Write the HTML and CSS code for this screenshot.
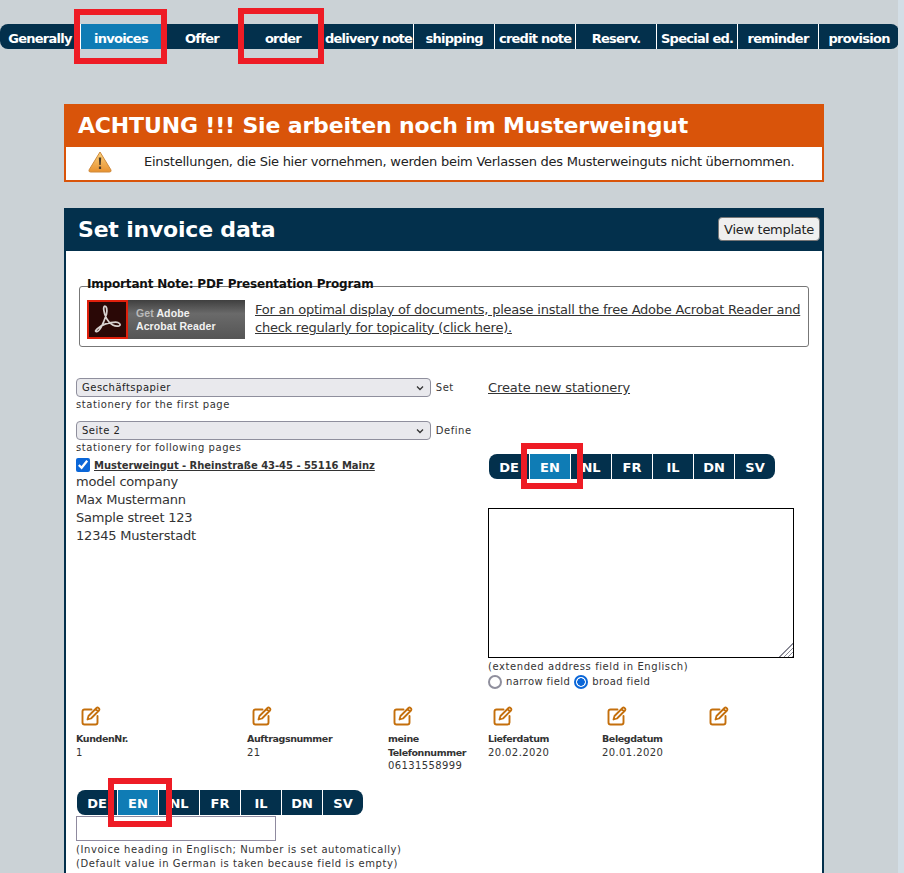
FILE: index.html
```html
<!DOCTYPE html>
<html lang="en">

<head>
  <meta charset="UTF-8">
  <meta name="viewport" content="width=device-width, initial-scale=1.0">
  <title>Set invoice data</title>
  <link rel="stylesheet" href="styles.css">
</head>

<body>
  <!-- main menu -->
  <ul class="tabs nav">
    <li>Generally</li>
    <li class="active">invoices</li>
    <li>Offer</li>
    <li>order</li>
    <li>delivery note</li>
    <li>shipping</li>
    <li>credit note</li>
    <li>Reserv.</li>
    <li>Special ed.</li>
    <li>reminder</li>
    <li>provision</li>
  </ul>

  <div class="alert">
    <h2 class="alert-head">ACHTUNG !!! Sie arbeiten noch im Musterweingut</h2>
    <div class="alert-body">
      <svg class="warn" viewBox="0 0 24 22" width="24" height="22">
        <defs>
          <linearGradient id="warn-fill" x1="0" y1="0" x2="0" y2="1">
            <stop offset="0" stop-color="#fbd27e"/>
            <stop offset="1" stop-color="#e8912f"/>
          </linearGradient>
        </defs>
        <path d="M12 1 L23 19 Q23.500 21 21.500 21 L2.500 21 Q0.500 21 1 19 Z" fill="url(#warn-fill)" stroke="#cf8a3c" stroke-width="1"/>
        <path d="M10.800 6.500 H13.200 L12.700 14 H11.300 Z M10.900 15.500 H13.100 V18 H10.900 Z" fill="#4a3a28"/>
      </svg>
      <span>Einstellungen, die Sie hier vornehmen, werden beim Verlassen des Musterweinguts nicht übernommen.</span>
    </div>
  </div>

  <div class="panel">
    <div class="panel-head">
      <h2>Set invoice data</h2>
      <button class="btn" type="button">View template</button>
    </div>

    <div class="panel-body">
      <div class="note">
        <div class="note-title">Important Note: PDF Presentation Program</div>
        <div class="badge">
          <div class="badge-logo">
            <svg viewBox="0 0 32 32" width="32" height="32">
              <path d="M5 27.500 C8 29 12 20 15 11 C16 6 15 3 13.500 3 C11.500 3 12 9 15 15 C18 21 24 23.500 27.500 22 C29.500 21 27 18.500 24 18.500 C18 18.500 10 21 6 25 C4.500 26.500 4 27.500 5 27.500 Z" fill="none" stroke="#d8d2d0" stroke-width="1.700"/>
            </svg>
          </div>
          <div class="badge-text"><span class="get">Get</span> Adobe<br>Acrobat Reader</div>
        </div>
        <a class="note-link" href="#">For an optimal display of documents, please install the free Adobe Acrobat Reader and check regularly for topicality (click here).</a>
      </div>

      <div class="cols">
        <div class="col-left">
          <div class="field">
            <select class="sel"><option>Geschäftspapier</option></select>
            Set stationery for the first page
          </div>
          <div class="field">
            <select class="sel"><option>Seite 2</option></select>
            Define stationery for following pages
          </div>
          <label class="sender">
            <input type="checkbox" checked>
            <span>Musterweingut - Rheinstraße 43-45 - 55116 Mainz</span>
          </label>
          <div class="address">
            model company<br>
            Max Mustermann<br>
            Sample street 123<br>
            12345 Musterstadt
          </div>
        </div>

        <div class="col-right">
          <a class="new-link" href="#">Create new stationery</a>
          <ul class="tabs lang lang-top">
            <li>DE</li>
            <li class="active">EN</li>
            <li>NL</li>
            <li>FR</li>
            <li>IL</li>
            <li>DN</li>
            <li>SV</li>
          </ul>
          <div class="addr-wrap">
            <textarea class="addr-box"></textarea>
            <div class="grip"></div>
          </div>
          <div class="hint">(extended address field in Englisch)</div>
          <div class="radios">
            <input type="radio" name="w"> narrow field
            <input type="radio" name="w" checked> broad field
          </div>
        </div>
      </div>

      <div class="meta">
        <div class="meta-item">
          <svg class="pen" viewBox="0 0 20 20" width="20" height="20"><use href="#pen"/></svg>
          <b>KundenNr.</b>1
        </div>
        <div class="meta-item">
          <svg class="pen" viewBox="0 0 20 20" width="20" height="20"><use href="#pen"/></svg>
          <b>Auftragsnummer</b>21
        </div>
        <div class="meta-item">
          <svg class="pen" viewBox="0 0 20 20" width="20" height="20"><use href="#pen"/></svg>
          <b>meine Telefonnummer</b>06131558999
        </div>
        <div class="meta-item">
          <svg class="pen" viewBox="0 0 20 20" width="20" height="20"><use href="#pen"/></svg>
          <b>Lieferdatum</b>20.02.2020
        </div>
        <div class="meta-item">
          <svg class="pen" viewBox="0 0 20 20" width="20" height="20"><use href="#pen"/></svg>
          <b>Belegdatum</b>20.01.2020
        </div>
        <div class="meta-item">
          <svg class="pen" viewBox="0 0 20 20" width="20" height="20"><use href="#pen"/></svg>
        </div>
      </div>

      <ul class="tabs lang">
        <li>DE</li>
        <li class="active">EN</li>
        <li>NL</li>
        <li>FR</li>
        <li>IL</li>
        <li>DN</li>
        <li>SV</li>
      </ul>
      <input class="heading-input" type="text">
      <div class="hint hint-lines">(Invoice heading in Englisch; Number is set automatically)<br>(Default value in German is taken because field is empty)</div>
    </div>
  </div>

  <!-- shared pencil icon -->
  <svg class="defs" width="0" height="0">
    <symbol id="pen" viewBox="0 0 20 20">
      <path d="M10.500 3.500 H3.500 Q1.500 3.500 1.500 5.500 V16.500 Q1.500 18.500 3.500 18.500 H14.500 Q16.500 18.500 16.500 16.500 V10" fill="none" stroke="#c46f0c" stroke-width="1.900" stroke-linecap="round"/>
      <path d="M6.500 13.500 L7.500 10 L15.500 2 Q16.500 1 17.700 2.200 Q19 3.500 18 4.500 L10 12.500 Z M14.500 3 L17 5.500" fill="none" stroke="#c46f0c" stroke-width="1.800" stroke-linejoin="round"/>
    </symbol>
  </svg>

  <!-- red marks drawn over the screenshot -->
  <div class="mark mark-invoices"></div>
  <div class="mark mark-order"></div>
  <div class="mark mark-lang-top"></div>
  <div class="mark mark-lang-bottom"></div>

  <div class="scroll-strip"></div>
</body>

</html>
```

FILE: styles.css
```css
* {
  padding: 0;
  margin: 0;
  box-sizing: border-box;
}

html,
body {
  height: 100%;
  overflow: hidden;
}

body {
  background: #cbd2d6;
  font-family: "DejaVu Sans", Verdana, sans-serif;
  font-size: 13px;
  color: #333;
  padding-top: 24px;
  display: flex;
  flex-direction: column;
}

li {
  list-style: none;
}

a {
  color: #333;
}

.tabs {
  display: flex;
  height: 25px;
  background: #03304c;
  border-radius: 8px;
  overflow: hidden;
  color: #fff;
  font-weight: bold;
  font-size: 13px;
}

.tabs li {
  flex: 1 1 0;
  padding: 0 1px;
  line-height: 28px;
  text-align: center;
  white-space: nowrap;
  border-right: 1px solid #fff;
}

.tabs li:last-child {
  border-right: 0;
}

.tabs .active {
  background: #0f7cb5;
}

.nav {
  width: 899px;
  flex: none;
  letter-spacing: -.75px;
}

.nav li {
  line-height: 29px;
}

.alert {
  flex: none;
  width: 760px;
  margin: 55px 0 0 64px;
  border: 2px solid #d9540a;
  background: #fff;
}

.alert-head {
  margin: -2px -2px 0;
  padding-left: 14px;
  background: #d9540a;
  color: #fff;
  font-size: 22px;
  letter-spacing: -.16px;
  line-height: 43px;
  height: 43px;
}

.alert-body {
  display: flex;
  align-items: center;
  height: 33px;
  padding: 0 0 4px 22px;
  color: #222;
  letter-spacing: -.25px;
}

.warn {
  margin-right: 32px;
}

.panel {
  flex: 1;
  width: 760px;
  margin: 26px 0 0 64px;
  border: 2px solid #03304c;
  border-bottom: 0;
  background: #fff;
}

.panel-head {
  display: flex;
  justify-content: space-between;
  align-items: center;
  height: 41px;
  padding: 0 2px 0 12px;
  background: #03304c;
  color: #fff;
}

.panel-head h2 {
  margin-top: -2px;
  font-size: 22px;
  letter-spacing: -.2px;
}

.btn {
  width: 102px;
  height: 24px;
  margin-top: -3px;
  font-family: inherit;
  font-size: 13px;
  letter-spacing: -.3px;
  color: #222;
  background: #efefef;
  border: 1px solid #767676;
  border-radius: 4px;
}

.panel-body {
  padding: 35px 0 0 10px;
}

.note {
  position: relative;
  display: flex;
  align-items: center;
  width: 730px;
  height: 61px;
  margin-left: 3px;
  padding: 6px 0 0 7px;
  border: 1px solid #777;
  border-radius: 3px;
}

.note-title {
  position: absolute;
  left: 7px;
  top: -10px;
  font-weight: bold;
  font-size: 12px;
  letter-spacing: -.18px;
  color: #111;
}

.badge {
  flex: none;
  display: flex;
  width: 158px;
  height: 39px;
  margin-right: 10px;
  background: linear-gradient(#3f3f3f, #6a6a6a 35%, #555);
}

.badge-logo {
  width: 41px;
  height: 39px;
  padding: 1px 2px;
  background: #2a0806;
  border: 2px solid #e0200c;
}

.badge-logo svg {
  display: block;
  width: 33px;
  height: 33px;
}

.badge-text {
  padding: 7px 0 0 8px;
  font-family: "Liberation Sans", sans-serif;
  color: #f2f2f2;
  font-size: 10.500px;
  font-weight: bold;
  letter-spacing: .1px;
  line-height: 12.500px;
}

.badge-text .get {
  color: #b9b9b9;
}

.note-link {
  margin-top: -2px;
  line-height: 18px;
  letter-spacing: -.23px;
}

.cols {
  display: grid;
  grid-template-columns: 412px 306px;
  margin-top: 31px;
}

.field {
  margin-bottom: 8px;
  font-size: 10px;
  line-height: 16px;
  letter-spacing: .55px;
}

.sel {
  appearance: none;
  width: 355px;
  height: 19px;
  margin-right: 1px;
  padding-left: 5px;
  font-family: inherit;
  font-size: 10px;
  letter-spacing: .5px;
  color: #222;
  background: #e9e9ed url("data:image/svg+xml,%3Csvg xmlns='http://www.w3.org/2000/svg' width='8' height='6'%3E%3Cpath d='M1 1.500 L4 4.500 L7 1.500' fill='none' stroke='%23333' stroke-width='1.300'/%3E%3C/svg%3E") no-repeat right 6px center;
  border: 1px solid #8f8f9d;
  border-radius: 4px;
  vertical-align: middle;
}

.sender {
  display: flex;
  align-items: center;
  margin-top: -6px;
  font-size: 10px;
  font-weight: bold;
  letter-spacing: -.04px;
  text-decoration: underline;
}

.sender input {
  width: 14px;
  height: 14px;
  margin-right: 4px;
  accent-color: #0a66d8;
  flex: none;
}

.address {
  margin-top: 1px;
  line-height: 18px;
  letter-spacing: -.2px;
}

.new-link {
  display: block;
  margin-top: 1px;
  line-height: 18px;
  letter-spacing: -.1px;
}

.lang {
  width: 286px;
  margin-left: 1px;
}

.lang-top {
  margin-top: 57px;
  margin-bottom: 29px;
}

.addr-wrap {
  position: relative;
}

.addr-box {
  display: block;
  width: 306px;
  height: 150px;
  border: 1px solid #000;
  resize: none;
}

.grip {
  position: absolute;
  right: 1px;
  bottom: 1px;
  width: 15px;
  height: 15px;
  background: repeating-linear-gradient(-45deg, #8a8a96 0 1px, #fff 1px 3px);
  clip-path: polygon(100% 0, 100% 100%, 0 100%);
}

.hint {
  font-size: 10px;
  letter-spacing: .58px;
  line-height: 14px;
}

.col-right .hint {
  margin-top: 2px;
}

.radios {
  display: flex;
  align-items: center;
  gap: 4px;
  font-size: 10px;
  letter-spacing: .4px;
  line-height: 15px;
}

.radios input {
  appearance: none;
  width: 14px;
  height: 14px;
  border: 2px solid #8f8f9d;
  border-radius: 50%;
  background: #fff;
}

.radios input:checked {
  border-color: #0a66d8;
  background: radial-gradient(circle, #0a66d8 0 3.500px, #fff 4px);
}

.meta {
  display: grid;
  grid-template-columns: 171px 141px 100px 114px 102px 80px;
  margin-top: 17px;
  font-size: 10px;
  line-height: 13.500px;
  letter-spacing: .4px;
}

.meta-item b {
  display: block;
  padding-right: 4px;
  font-size: 9.500px;
  letter-spacing: -.4px;
}

.pen {
  display: block;
  margin: 0 0 6px 5px;
}

.panel-body > .lang {
  margin-top: 17px;
}

.heading-input {
  display: block;
  width: 200px;
  height: 25px;
  margin-top: 1px;
  border: 1px solid #8f8a9f;
}

.hint-lines {
  margin-top: 2px;
}

.defs {
  position: absolute;
}

.mark {
  position: absolute;
  border: 6px solid #ee1c25;
}

.mark-invoices {
  left: 74px;
  top: 9px;
  width: 93px;
  height: 55px;
}

.mark-order {
  left: 238px;
  top: 8px;
  width: 86px;
  height: 56px;
}

.mark-lang-top {
  left: 521px;
  top: 443px;
  width: 62px;
  height: 46px;
}

.mark-lang-bottom {
  left: 108px;
  top: 778px;
  width: 64px;
  height: 49px;
}

.scroll-strip {
  position: fixed;
  top: 0;
  right: 0;
  bottom: 0;
  width: 6px;
  background: #d3dee6;
}
```
